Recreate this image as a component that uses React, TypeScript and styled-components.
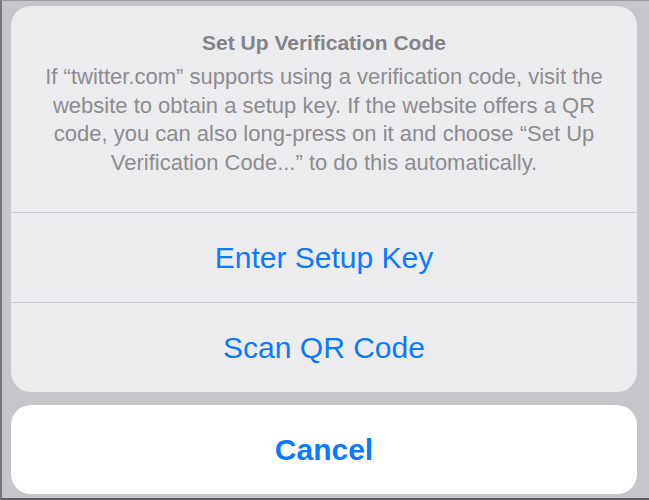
import React from "react"
import styled, { createGlobalStyle } from "styled-components"

const GlobalStyle = createGlobalStyle`
  html, body {
    margin: 0;
    padding: 0;
    background: #c6c6ca;
  }
  body {
    font-family: "Liberation Sans", Arial, sans-serif;
    -webkit-font-smoothing: antialiased;
  }
`

const Frame = styled.div`
  width: 649px;
  height: 500px;
  box-sizing: border-box;
  padding: 5px 12px 4px 9px;
  display: flex;
  flex-direction: column;
  gap: 13px;
  background: #c6c6ca;
  border-left: 2px solid #77777b;
  border-top: 1px solid #9a9a9e;
  border-bottom: 2px solid #5c5c60;
`

const Sheet = styled.div`
  height: 386px;
  background: #ececef;
  border-radius: 20px;
  display: flex;
  flex-direction: column;
  overflow: hidden;
`

const Header = styled.div`
  height: 206px;
  box-sizing: border-box;
  padding-top: 24px;
  display: flex;
  flex-direction: column;
  align-items: center;
  text-align: center;
`

const Title = styled.div`
  font-size: 21px;
  font-weight: 700;
  line-height: 26px;
  color: #838387;
`

const Message = styled.p`
  margin: 7px 0 0;
  font-size: 22px;
  line-height: 28.5px;
  color: #8c8c90;
`

const Action = styled.button<{ $bold?: boolean }>`
  flex: 1;
  border: none;
  border-top: 1px solid #cbcbcf;
  background: transparent;
  color: #0a7aff;
  font-family: inherit;
  font-size: 30px;
  font-weight: ${props => (props.$bold ? 700 : 400)};
  padding: 0;
  cursor: pointer;
`

const CancelCard = styled.div`
  height: 89px;
  background: #ffffff;
  border-radius: 20px;
  display: flex;
  overflow: hidden;
`

const CancelButton = styled(Action)`
  border-top: none;
`

function App() {
  return (
    <>
      <GlobalStyle />
      <Frame>
        <Sheet>
          <Header>
            <Title>Set Up Verification Code</Title>
            <Message>
              If “twitter.com” supports using a verification code, visit the
              <br />
              website to obtain a setup key. If the website offers a QR
              <br />
              code, you can also long-press on it and choose “Set Up
              <br />
              Verification Code...” to do this automatically.
            </Message>
          </Header>
          <Action>Enter Setup Key</Action>
          <Action>Scan QR Code</Action>
        </Sheet>
        <CancelCard>
          <CancelButton $bold>Cancel</CancelButton>
        </CancelCard>
      </Frame>
    </>
  )
}

export default App
